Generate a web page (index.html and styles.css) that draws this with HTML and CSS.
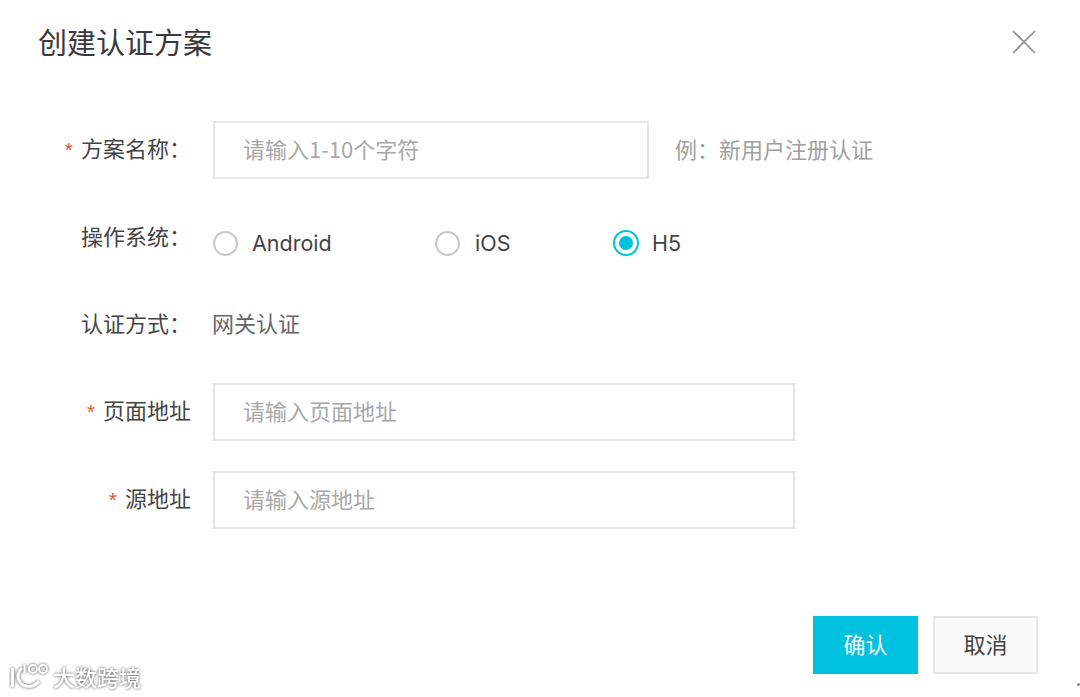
FILE: index.html
```html
<!DOCTYPE html>
<html lang="zh-CN">
<head>
<meta charset="utf-8">
<title>创建认证方案</title>
<link rel="stylesheet" href="styles.css">
</head>
<body>
<div class="dialog">
  <header class="head">
    <h1 class="title">创建认证方案</h1>
    <svg class="close" width="26" height="26" viewBox="0 0 26 26"><path d="M2 2L24 24M24 2L2 24" fill="none" stroke="#8f8f8f" stroke-width="1.6"/></svg>
  </header>
  <form class="form">
    <div class="row">
      <label class="label"><span class="req">*</span>方案名称：</label>
      <input class="input short" placeholder="请输入1-10个字符">
      <span class="hint">例：新用户注册认证</span>
    </div>
    <div class="row radios-row">
      <label class="label">操作系统：</label>
      <div class="radios">
        <span class="radio r1"><i class="dot"></i>Android</span>
        <span class="radio r2"><i class="dot"></i>iOS</span>
        <span class="radio r3"><i class="dot on"></i>H5</span>
      </div>
    </div>
    <div class="row">
      <label class="label">认证方式：</label>
      <span class="value">网关认证</span>
    </div>
    <div class="row">
      <label class="label"><span class="req">*</span>页面地址</label>
      <input class="input long" placeholder="请输入页面地址">
    </div>
    <div class="row">
      <label class="label"><span class="req">*</span>源地址</label>
      <input class="input long" placeholder="请输入源地址">
    </div>
  </form>
  <footer class="foot">
    <button class="btn primary" type="button">确认</button>
    <button class="btn" type="button">取消</button>
  </footer>
</div>
<div class="mark">
  <svg class="mark-logo" width="42" height="30" viewBox="0 0 42 30"><g fill="none" stroke="#fff" stroke-width="3"><path d="M3.5 7V26"/><path d="M13 7C8 12 8 17 11 21C14 26 24 28 30 20"/><path d="M15.5 3V12" stroke-width="2"/><circle cx="24" cy="8" r="4" stroke-width="2"/><circle cx="34" cy="8" r="4" stroke-width="2"/></g></svg>
  <span class="mark-text">大数跨境</span>
</div>
<i class="corner"></i>
</body>
</html>
```
FILE: styles.css
```css
* { box-sizing: border-box; }
html, body { margin: 0; height: 697px; overflow: hidden; background: #fff; }
body { font-family: "Noto Sans CJK SC", sans-serif; color: #444; font-size: 22px; position: relative; }
.dialog { display: flex; flex-direction: column; height: 697px; }
.head { display: flex; justify-content: space-between; align-items: center; height: 121px; padding: 0 43px 37px 38px; }
.title { margin: 0 0 3px; font-size: 29px; font-weight: 400; color: #3a3a3a; line-height: 40px; }
.close { display: block; }
.form { display: flex; flex-direction: column; gap: 30px; }
.row { display: flex; align-items: center; height: 58px; }
.radios-row { height: 56px; }
.label { width: 191px; flex: none; margin: 0 22px 4px 0; text-align: right; color: #444; white-space: nowrap; line-height: 32px; }
.req { color: #f0552f; font-size: 21px; margin-right: 8px; font-family: "Liberation Sans", sans-serif; }
.input { height: 58px; border: 2px solid #e6e6e6; background: #fff; padding: 0 28px 4px; font: inherit; color: #444; outline: none; border-radius: 0; }
.input::placeholder { color: #a8a8a8; opacity: 1; }
.short { width: 436px; }
.long { width: 582px; }
.hint { margin: 0 0 4px 26px; color: #a0a0a0; }
.value { color: #666; margin: 0 0 4px -1px; }
.radios { display: flex; padding-top: 12px; font-family: Inter, "Liberation Sans", sans-serif; font-size: 21.5px; color: #444; }
.radio { display: flex; align-items: center; gap: 15px; line-height: 28px; }
.r1 { width: 222px; gap: 14px; }
.r2 { width: 178px; }
.dot { display: block; width: 25px; height: 25px; border: 2px solid #c8c8c8; border-radius: 50%; background: #fff; flex: none; }
.dot.on { border-color: #00c1de; position: relative; width: 26px; height: 26px; margin-right: -2px; }
.dot.on::after { content: ""; position: absolute; inset: 4px; border-radius: 50%; background: #00c1de; }
.foot { display: flex; justify-content: flex-end; gap: 15px; padding-right: 42px; margin-top: 87px; }
.btn { width: 105px; height: 58px; border: 2px solid #e6e6e6; background: #fafafa; font: inherit; color: #444; padding: 0 0 4px; border-radius: 0; }
.primary { background: #00c1de; border-color: #00c1de; color: #fff; }
.mark { position: absolute; left: 9px; top: 661px; display: flex; align-items: center; gap: 2px; filter: drop-shadow(0 0 1.5px rgba(0,0,0,.7)); }
.mark-logo { display: block; }
.mark-text { color: #fff; font-size: 22px; line-height: 30px; font-weight: 500; }
.corner { position: absolute; right: 0; top: 683px; width: 3px; height: 3px; background: #888; border-radius: 50%; }
```
